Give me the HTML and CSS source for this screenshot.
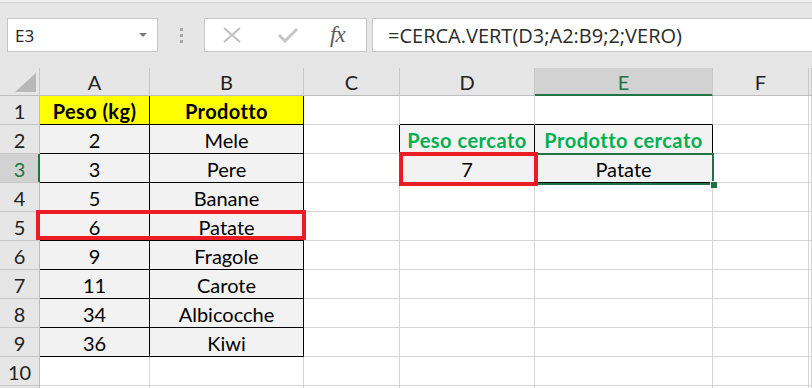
FILE: index.html
```html
<!DOCTYPE html>
<html lang="it">
<head>
<meta charset="utf-8">
<title>CERCA.VERT</title>
<link rel="stylesheet" href="styles.css">
</head>
<body>
<div class="app">
  <div class="toolbar">
    <div class="namebox"><span class="nb-text">E3</span><span class="nb-arrow"></span></div>
    <div class="sep"><span class="dot"></span><span class="dot"></span><span class="dot"></span></div>
    <div class="buttons">
      <svg class="ic-x" width="18" height="16" viewBox="0 0 18 16"><path d="M1 1 L17 15 M17 1 L1 15" stroke="#bfbfbf" stroke-width="2" fill="none"/></svg>
      <svg class="ic-ok" width="20" height="15" viewBox="0 0 20 15"><path d="M1 7 L7 13 L19 1" stroke="#c6c6c6" stroke-width="3" fill="none"/></svg>
      <span class="fx">fx</span>
    </div>
    <div class="formula">=CERCA.VERT(D3;A2:B9;2;VERO)</div>
  </div>
  <div class="sheet">
    <div class="c h corner"><span class="tri"></span></div>
    <div class="c h">A</div><div class="c h">B</div><div class="c h">C</div><div class="c h">D</div><div class="c h sel-col">E</div><div class="c h">F</div><div class="c h"></div>

    <div class="c rh">1</div>
    <div class="c y bk-r bk-b">Peso (kg)</div><div class="c y bk-r bk-b">Prodotto</div><div class="c"></div><div class="c bk-b"></div><div class="c bk-b"></div><div class="c"></div><div class="c"></div>

    <div class="c rh">2</div>
    <div class="c g bk-r bk-b">2</div><div class="c g bk-r bk-b">Mele</div><div class="c bk-r"></div><div class="c g bk-r bk-b green">Peso cercato</div><div class="c g bk-r bk-b green">Prodotto cercato</div><div class="c"></div><div class="c"></div>

    <div class="c rh sel-row">3</div>
    <div class="c g bk-r bk-b">3</div><div class="c g bk-r bk-b">Pere</div><div class="c bk-r"></div><div class="c g bk-r bk-b">7</div><div class="c g bk-r bk-b">Patate</div><div class="c"></div><div class="c"></div>

    <div class="c rh">4</div>
    <div class="c g bk-r bk-b">5</div><div class="c g bk-r bk-b">Banane</div><div class="c"></div><div class="c"></div><div class="c"></div><div class="c"></div><div class="c"></div>

    <div class="c rh">5</div>
    <div class="c g bk-r bk-b">6</div><div class="c g bk-r bk-b">Patate</div><div class="c"></div><div class="c"></div><div class="c"></div><div class="c"></div><div class="c"></div>

    <div class="c rh">6</div>
    <div class="c g bk-r bk-b">9</div><div class="c g bk-r bk-b">Fragole</div><div class="c"></div><div class="c"></div><div class="c"></div><div class="c"></div><div class="c"></div>

    <div class="c rh">7</div>
    <div class="c g bk-r bk-b">11</div><div class="c g bk-r bk-b">Carote</div><div class="c"></div><div class="c"></div><div class="c"></div><div class="c"></div><div class="c"></div>

    <div class="c rh">8</div>
    <div class="c g bk-r bk-b">34</div><div class="c g bk-r bk-b">Albicocche</div><div class="c"></div><div class="c"></div><div class="c"></div><div class="c"></div><div class="c"></div>

    <div class="c rh">9</div>
    <div class="c g bk-r bk-b">36</div><div class="c g bk-r bk-b">Kiwi</div><div class="c"></div><div class="c"></div><div class="c"></div><div class="c"></div><div class="c"></div>

    <div class="c rh">10</div>
    <div class="c"></div><div class="c"></div><div class="c"></div><div class="c"></div><div class="c"></div><div class="c"></div><div class="c"></div>

    <div class="c rh"></div>
    <div class="c"></div><div class="c"></div><div class="c"></div><div class="c"></div><div class="c"></div><div class="c"></div><div class="c"></div>

    <div class="selection"><span class="handle"></span></div>
    <div class="mark mark-row5"></div>
    <div class="mark mark-d3"></div>
  </div>
</div>
</body>
</html>
```
FILE: styles.css
```css
* { box-sizing: border-box; }
html, body { margin: 0; padding: 0; }
body { background: #fff; overflow: hidden; width: 812px; height: 388px; }
.app { width: 812px; height: 388px; overflow: hidden; }

.toolbar {
  height: 68px;
  background: #e6e6e6;
  box-shadow: inset 0 2px 0 #f0f0f0, inset 0 3px 0 #d2d2d2;
  display: flex;
  align-items: flex-start;
  padding-top: 18px;
  padding-left: 7px;
}
.namebox {
  width: 151px; height: 34px;
  background: #fff; border: 1px solid #c6c6c6;
  display: flex; align-items: center; justify-content: space-between;
  padding: 0 10px 0 7px;
  font-family: "Open Sans", "Noto Sans", sans-serif; font-size: 17px; color: #222;
}
.nb-arrow {
  width: 0; height: 0;
  border-left: 4px solid transparent; border-right: 4px solid transparent;
  border-top: 4px solid #7a7a7a;
}
.sep {
  width: 46px; height: 34px;
  display: flex; flex-direction: column; align-items: center; justify-content: center; gap: 3px;
}
.dot { width: 3px; height: 3px; background: #a6a6a6; }
.buttons {
  width: 163px; height: 34px;
  background: #fff; border: 1px solid #c6c6c6;
  display: flex; align-items: center;
  padding-left: 18px;
}
.ic-x { margin-right: 37px; }
.ic-ok { margin-right: 32px; margin-top: 1px; }
.fx {
  font-family: "Liberation Serif", "DejaVu Serif", serif; font-style: italic;
  font-size: 23px; color: #5a5a5a; letter-spacing: -1px;
}
.formula {
  flex: 1; height: 34px; margin-left: 5px;
  background: #fff; border: 1px solid #c6c6c6; border-right: 0;
  display: flex; align-items: center;
  padding-left: 15px;
  font-family: "Open Sans", "Noto Sans", sans-serif; font-size: 20px; color: #2b2b2b;
  white-space: nowrap;
}

.sheet {
  position: relative;
  display: grid;
  grid-template-columns: 40px 110px 154px 96px 135px 178px 96px 1fr;
  grid-template-rows: 28px repeat(11, 29px);
  font-family: "Lato", "Liberation Sans", sans-serif;
  font-size: 20px; color: #000;
}
.c {
  border-right: 1px solid #d4d4d4;
  border-bottom: 1px solid #d4d4d4;
  display: flex; align-items: center; justify-content: center;
  white-space: nowrap; overflow: hidden;
  padding-top: 1px;
}
.h { background: #e6e6e6; border-right-color: #c8c8c8; border-bottom-color: #bdbdbd; color: #222; }
.rh { background: #e6e6e6; border-right-color: #bdbdbd; border-bottom-color: #c8c8c8; color: #222; }
.corner { justify-content: flex-end; align-items: flex-end; padding: 0 3px 3px 0; }
.tri {
  width: 21px; height: 19px; background: #b8b8b8;
  clip-path: polygon(100% 0, 100% 100%, 0 100%);
}
.sel-col { background: #d2d2d2; color: #217346; border-bottom: 1px solid #217346; box-shadow: inset 0 -1px 0 #217346; }
.sel-row { background: #d2d2d2; color: #217346; border-right: 1px solid #217346; box-shadow: inset -1px 0 0 #217346; }

.y { background: #ffff00; font-weight: 700; letter-spacing: 0.4px; }
.g { background: #f2f2f2; }
.green { color: #00b050; font-weight: 700; letter-spacing: 0.5px; }
.bk-r { border-right-color: #000; }
.bk-b { border-bottom-color: #000; }

.selection {
  position: absolute; left: 534px; top: 85px; width: 180px; height: 32px;
  border: 2px solid #217346;
}
.handle {
  position: absolute; right: -5px; bottom: -5px; width: 7px; height: 7px;
  background: #217346; border-left: 1px solid #fff; border-top: 1px solid #fff;
}
.mark { position: absolute; border: 4px solid #ec1c24; }
.mark-row5 { left: 36px; top: 142px; width: 270px; height: 30px; }
.mark-d3 { left: 399px; top: 84px; width: 139px; height: 34px; }
```
